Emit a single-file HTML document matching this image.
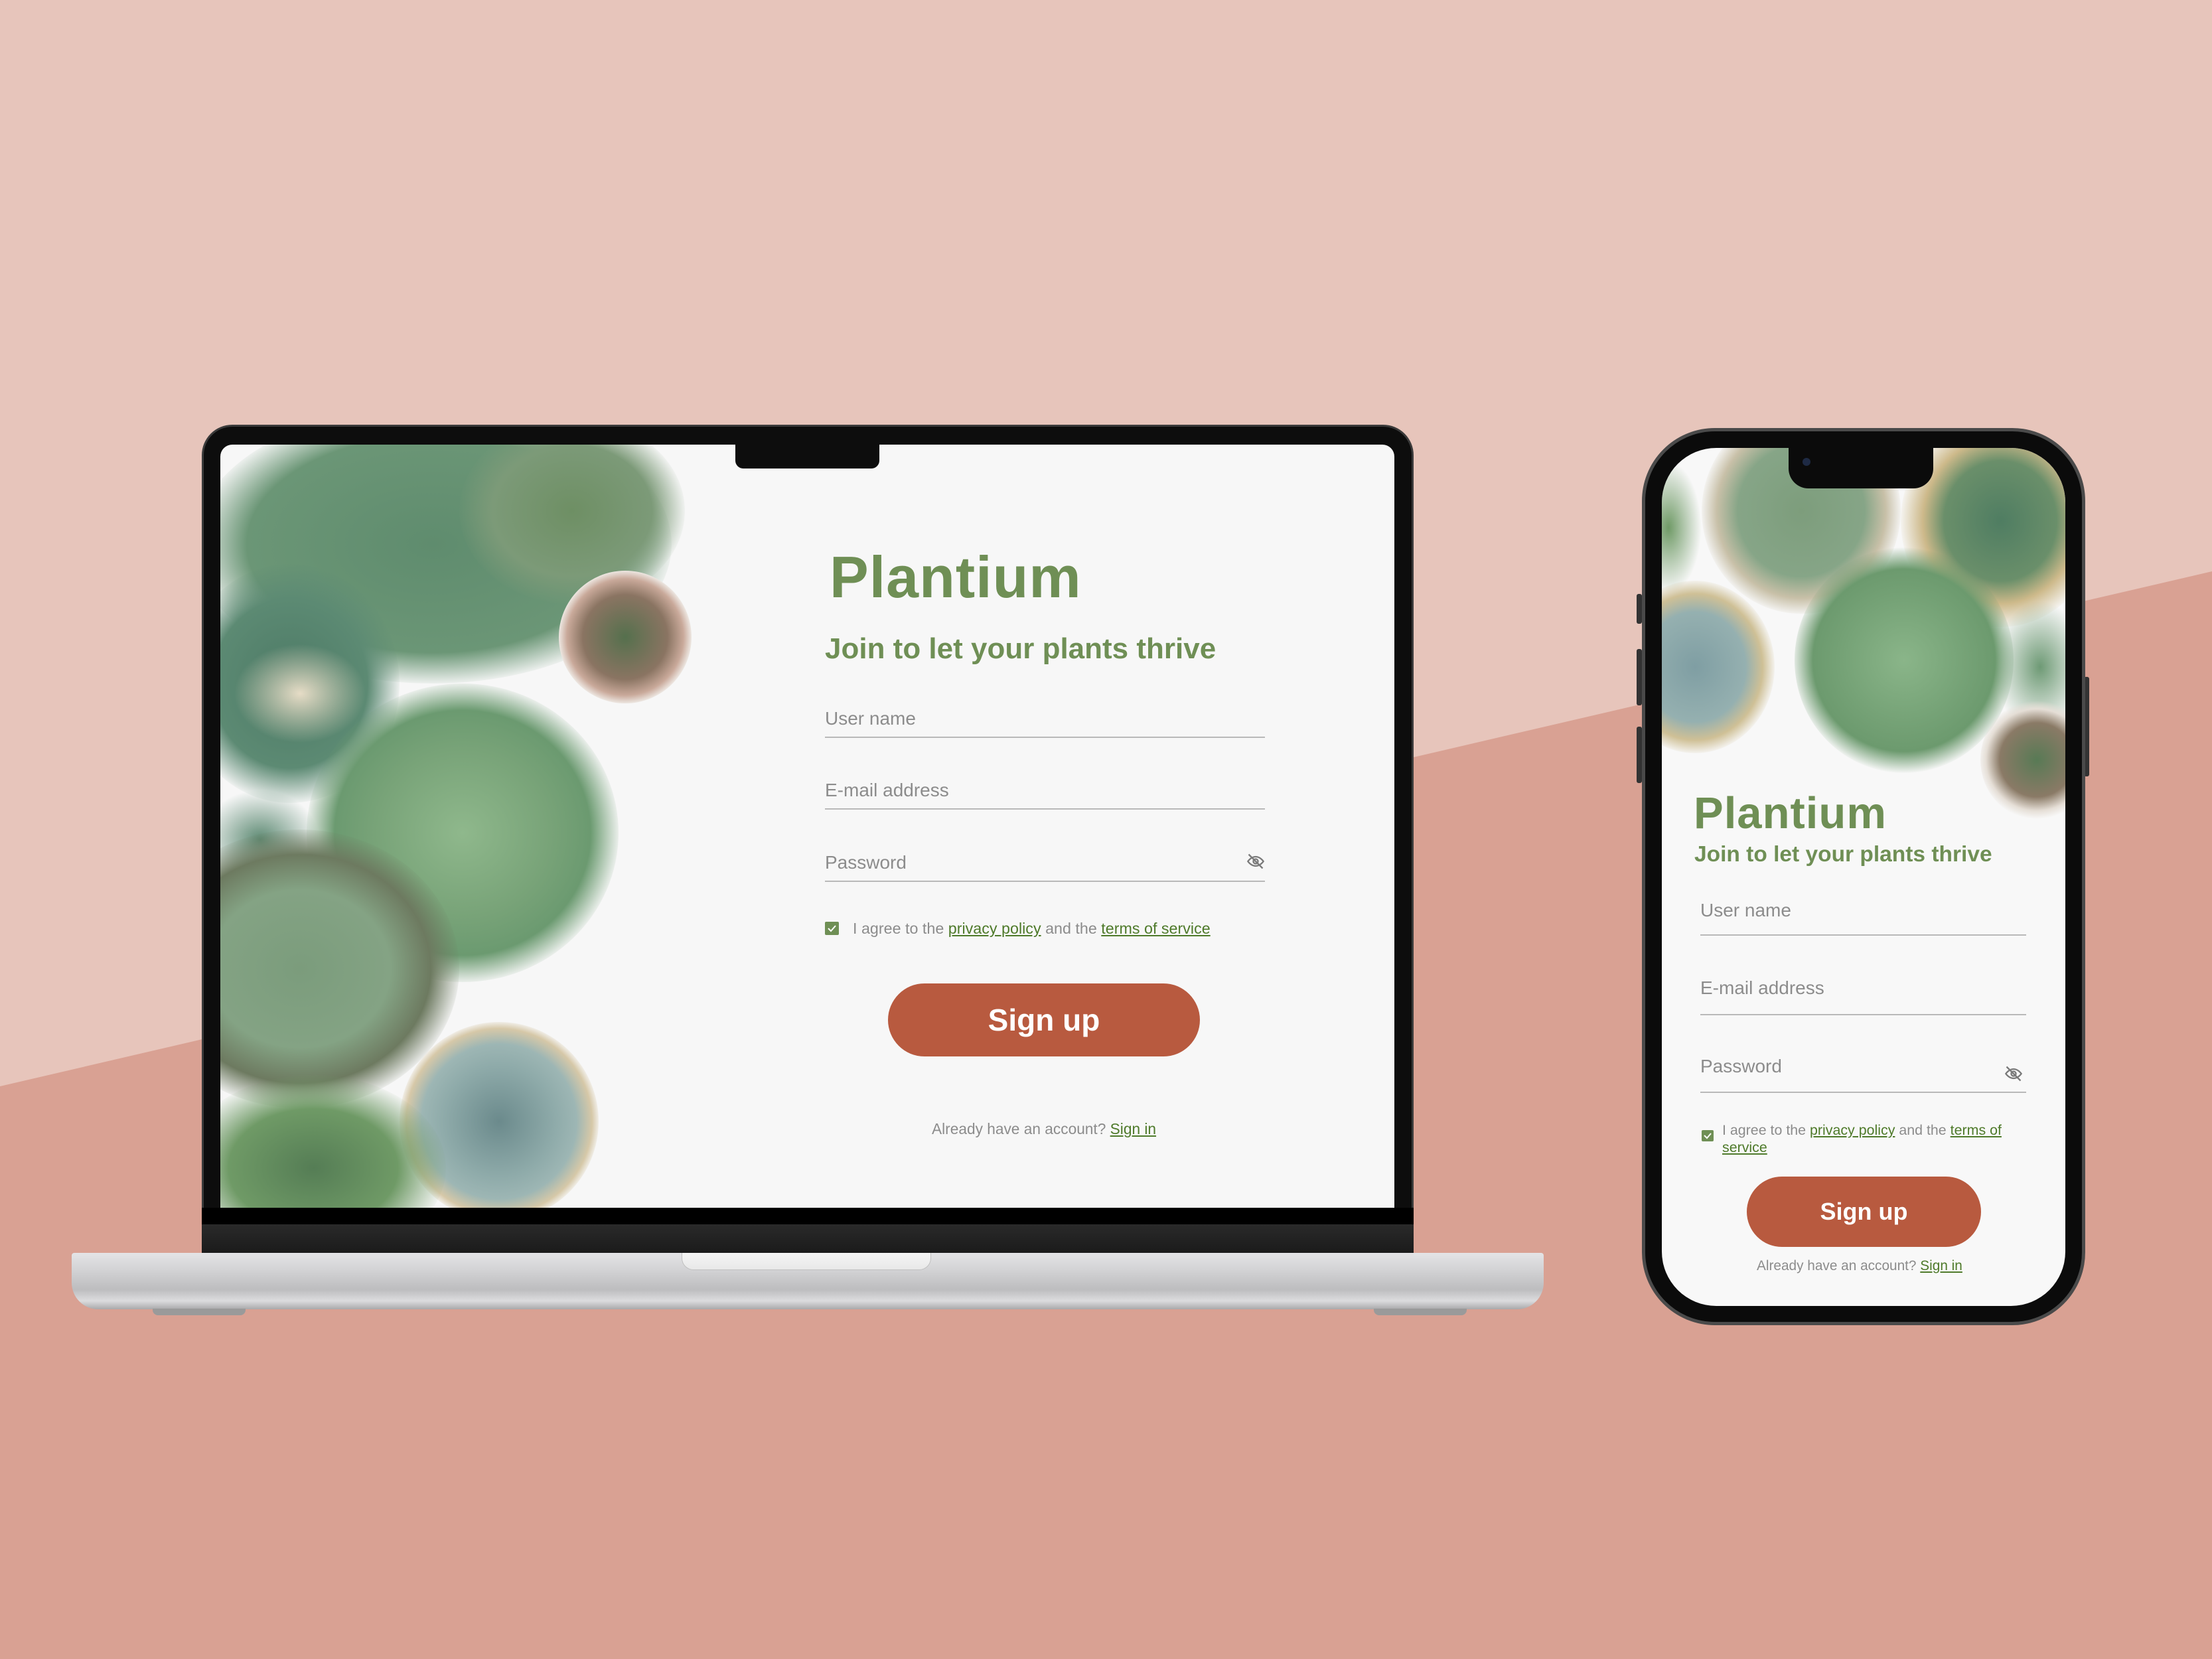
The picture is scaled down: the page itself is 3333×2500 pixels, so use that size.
<!DOCTYPE html>
<html><head><meta charset="utf-8"><style>
*{margin:0;padding:0;box-sizing:border-box}
body{width:3333px;height:2500px;position:relative;overflow:hidden;background:#e7c5bb;font-family:"Liberation Sans",Arial,sans-serif}
.abs{position:absolute}
.bg2{position:absolute;left:0;top:0;width:3333px;height:2500px;background:#d9a193;clip-path:polygon(0 1637px,3333px 861px,3333px 2500px,0 2500px)}
.blob{position:absolute;border-radius:50%}
.g{color:#6f8f55}
.lbl{position:absolute;color:#8c8c8c;font-size:28px;line-height:32px}
.line{position:absolute;height:2px;background:#b9b9b9}
a{color:#4e7a2a;text-decoration:underline}
</style></head><body>
<div class="bg2"></div>

<!-- LAPTOP -->
<div class="abs" style="left:304px;top:640px;width:1826px;height:1250px;background:#0d0d0d;border-radius:46px 46px 0 0;border:3px solid #3a3a3a;border-bottom:none"></div>
<div class="abs" style="left:332px;top:670px;width:1769px;height:1150px;background:#f7f7f7;border-radius:18px 18px 0 0;overflow:hidden">
  <div class="blob" style="left:-40px;top:-60px;width:720px;height:420px;background:radial-gradient(ellipse,#5f8c6e 0%,#6b9676 55%,rgba(110,150,120,0) 72%)"></div>
  <div class="blob" style="left:360px;top:-40px;width:340px;height:280px;background:radial-gradient(ellipse,#6e8f64 0%,#7c9a78 50%,rgba(240,240,235,0) 72%)"></div>
  <div class="blob" style="left:-60px;top:180px;width:330px;height:360px;background:radial-gradient(ellipse,#4d7a66 0%,#5c8a73 50%,rgba(100,140,120,0) 72%)"></div>
  <div class="blob" style="left:20px;top:300px;width:200px;height:150px;background:radial-gradient(ellipse,#e6dcc6 0%,rgba(230,220,200,0) 70%)"></div>
  <div class="blob" style="left:-30px;top:520px;width:180px;height:150px;background:radial-gradient(ellipse,#5d8a73 0%,rgba(93,138,115,0) 70%)"></div>
  <div class="blob" style="left:510px;top:190px;width:200px;height:200px;background:radial-gradient(circle,#55704d 0%,#8a7462 45%,#c9a99a 62%,#f2f0ec 72%,rgba(247,247,247,0) 75%)"></div>
  <div class="blob" style="left:130px;top:360px;width:470px;height:450px;background:radial-gradient(ellipse,#8fb88c 0%,#78a378 40%,#6b9a70 58%,rgba(120,150,120,0) 72%)"></div>
  <div class="blob" style="left:-120px;top:580px;width:480px;height:420px;background:radial-gradient(ellipse,#7b9c7c 0%,#84a384 40%,#6d7a60 58%,rgba(200,190,170,0) 72%)"></div>
  <div class="blob" style="left:270px;top:870px;width:300px;height:300px;background:radial-gradient(circle,#6b8a8c 0%,#8fabaa 40%,#9db6b4 55%,#d6c8a8 66%,rgba(247,247,247,0) 72%)"></div>
  <div class="blob" style="left:-60px;top:950px;width:400px;height:280px;background:radial-gradient(ellipse,#557d55 0%,#6f9a66 45%,rgba(120,160,110,0) 72%)"></div>
</div>
<div class="abs" style="left:1108px;top:668px;width:217px;height:38px;background:#0d0d0d;border-radius:0 0 12px 12px"></div>
<div class="abs" style="left:304px;top:1820px;width:1826px;height:25px;background:#000"></div>
<div class="abs" style="left:304px;top:1845px;width:1826px;height:45px;background:linear-gradient(#2a2a2a,#1a1a1a)"></div>
<div class="abs" style="left:108px;top:1888px;width:2218px;height:85px;border-radius:4px 4px 40px 40px;background:linear-gradient(#e4e4e6,#d3d3d5 30%,#bdbdbf 65%,#dcdcde 85%,#a9a9ab)"></div>
<div class="abs" style="left:1027px;top:1888px;width:376px;height:26px;background:linear-gradient(#f5f5f5,#e8e8e8);border-radius:0 0 18px 18px;border:1px solid #c0c0c0;border-top:none"></div>
<div class="abs" style="left:230px;top:1972px;width:140px;height:10px;background:#9a9a9a;border-radius:0 0 8px 8px"></div>
<div class="abs" style="left:2070px;top:1972px;width:140px;height:10px;background:#9a9a9a;border-radius:0 0 8px 8px"></div>

<!-- laptop form -->
<div class="abs g" style="left:1250px;top:820px;font-size:88px;font-weight:bold;letter-spacing:1px;line-height:100px">Plantium</div>
<div class="abs g" style="left:1243px;top:953px;font-size:44px;font-weight:bold;line-height:50px">Join to let your plants thrive</div>
<div class="lbl" style="left:1243px;top:1067px">User name</div>
<div class="line" style="left:1243px;top:1110px;width:663px"></div>
<div class="lbl" style="left:1243px;top:1175px">E-mail address</div>
<div class="line" style="left:1243px;top:1218px;width:663px"></div>
<div class="lbl" style="left:1243px;top:1284px">Password</div>
<div class="line" style="left:1243px;top:1327px;width:663px"></div>
<svg class="abs" style="left:1878px;top:1284px" width="28" height="28" viewBox="0 0 24 24" fill="none" stroke="#7a7a7a" stroke-width="2"><path d="M2 12s4-6 10-6 10 6 10 6-4 6-10 6S2 12 2 12z"/><circle cx="12" cy="12" r="3"/><path d="M3 3l18 18"/></svg>
<div class="abs" style="left:1243px;top:1389px;width:21px;height:20px;background:#6f8f55;border-radius:2px"><svg width="21" height="20" viewBox="0 0 21 20"><path d="M5 10l4 4 7-8" stroke="#fff" stroke-width="2" fill="none"/></svg></div>
<div class="abs" style="left:1285px;top:1386px;font-size:23.3px;color:#8c8c8c;white-space:nowrap">I agree to the <a>privacy policy</a> and the <a>terms of service</a></div>
<div class="abs" style="left:1338px;top:1482px;width:470px;height:110px;background:#b85a3f;border-radius:55px;color:#fff;font-size:46px;font-weight:bold;text-align:center;line-height:110px">Sign up</div>
<div class="abs" style="left:1404px;top:1688px;font-size:22.7px;color:#8c8c8c;white-space:nowrap">Already have an account? <a>Sign in</a></div>

<!-- PHONE -->
<div class="abs" style="left:2466px;top:895px;width:8px;height:45px;background:#333;border-radius:3px"></div>
<div class="abs" style="left:2466px;top:978px;width:8px;height:85px;background:#333;border-radius:3px"></div>
<div class="abs" style="left:2466px;top:1095px;width:8px;height:85px;background:#333;border-radius:3px"></div>
<div class="abs" style="left:3140px;top:1020px;width:8px;height:150px;background:#333;border-radius:3px"></div>
<div class="abs" style="left:2474px;top:645px;width:668px;height:1352px;background:#0b0b0b;border-radius:110px;border:5px solid #4a4a4a"></div>
<div class="abs" style="left:2504px;top:675px;width:608px;height:1293px;background:#f8f8f8;border-radius:82px;overflow:hidden">
  <div class="blob" style="left:60px;top:-60px;width:300px;height:310px;background:radial-gradient(ellipse,#7d9d7c 0%,#86a587 45%,#c8c0a8 60%,rgba(247,247,247,0) 72%)"></div>
  <div class="blob" style="left:360px;top:-50px;width:300px;height:320px;background:radial-gradient(ellipse,#4f7d62 0%,#6a8f6a 40%,#cdb98a 55%,rgba(247,247,247,0) 72%)"></div>
  <div class="blob" style="left:-40px;top:20px;width:100px;height:200px;background:radial-gradient(ellipse,#6f9a66 0%,rgba(111,154,102,0) 70%)"></div>
  <div class="blob" style="left:200px;top:150px;width:330px;height:340px;background:radial-gradient(circle,#8ab589 0%,#75a276 40%,#6c9a6e 58%,rgba(200,200,190,0) 72%)"></div>
  <div class="blob" style="left:-70px;top:200px;width:240px;height:260px;background:radial-gradient(ellipse,#7f9ea3 0%,#95b0b0 45%,#cfc096 60%,rgba(247,247,247,0) 72%)"></div>
  <div class="blob" style="left:500px;top:230px;width:140px;height:200px;background:radial-gradient(ellipse,#6e9a75 0%,rgba(110,154,117,0) 70%)"></div>
  <div class="blob" style="left:480px;top:380px;width:170px;height:180px;background:radial-gradient(circle,#587a55 0%,#8a7a66 45%,#e5ded6 62%,rgba(247,247,247,0) 72%)"></div>
</div>
<div class="abs" style="left:2695px;top:672px;width:218px;height:64px;background:#0b0b0b;border-radius:0 0 30px 30px"></div>
<div class="abs" style="left:2716px;top:690px;width:12px;height:12px;background:#1e2a44;border-radius:50%"></div>

<div class="abs g" style="left:2552px;top:1186px;font-size:67px;font-weight:bold;letter-spacing:1px;line-height:80px">Plantium</div>
<div class="abs g" style="left:2553px;top:1268px;font-size:33.5px;font-weight:bold;line-height:40px">Join to let your plants thrive</div>
<div class="lbl" style="left:2562px;top:1356px">User name</div>
<div class="line" style="left:2562px;top:1408px;width:491px"></div>
<div class="lbl" style="left:2562px;top:1473px">E-mail address</div>
<div class="line" style="left:2562px;top:1528px;width:491px"></div>
<div class="lbl" style="left:2562px;top:1591px">Password</div>
<div class="line" style="left:2562px;top:1645px;width:491px"></div>
<svg class="abs" style="left:3020px;top:1604px" width="28" height="28" viewBox="0 0 24 24" fill="none" stroke="#7a7a7a" stroke-width="2"><path d="M2 12s4-6 10-6 10 6 10 6-4 6-10 6S2 12 2 12z"/><circle cx="12" cy="12" r="3"/><path d="M3 3l18 18"/></svg>
<div class="abs" style="left:2564px;top:1703px;width:18px;height:17px;background:#6f8f55;border-radius:2px"><svg width="18" height="17" viewBox="0 0 18 17"><path d="M4 8l4 4 6-7" stroke="#fff" stroke-width="2" fill="none"/></svg></div>
<div class="abs" style="left:2595px;top:1690px;width:435px;font-size:21.4px;line-height:26px;color:#8c8c8c">I agree to the <a>privacy policy</a> and the <a>terms of service</a></div>
<div class="abs" style="left:2632px;top:1773px;width:353px;height:106px;background:#b85a3f;border-radius:53px;color:#fff;font-size:36px;font-weight:bold;text-align:center;line-height:106px">Sign up</div>
<div class="abs" style="left:2647px;top:1896px;font-size:20.8px;color:#8c8c8c;white-space:nowrap">Already have an account? <a>Sign in</a></div>
</body></html>
